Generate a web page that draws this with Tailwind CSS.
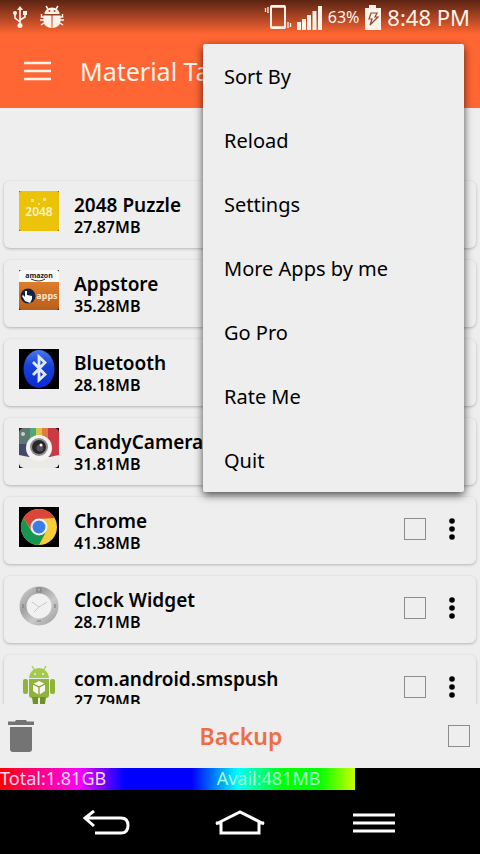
<!DOCTYPE html>
<html lang="en">
<head>
    <meta charset="UTF-8">
    <meta name="viewport" content="width=device-width, initial-scale=1.0">
    <title>Material Task Manager</title>
    <script src="https://cdn.jsdelivr.net/npm/@tailwindcss/browser@4"></script>
</head>
<body class="bg-black font-['Noto_Sans',sans-serif] text-black">
<div class="relative flex flex-col h-screen overflow-hidden">

    <!-- Header -->
    <header class="bg-[#ff6633] text-[#fff3ea]">
        <div class="flex items-center justify-between h-[34px] pl-3 pr-[10px] bg-linear-to-b from-[#5c2413] to-[#ff6633]">
            <div class="flex items-center gap-3">
                <svg class="w-4 h-6" viewBox="0 0 16 24" fill="none" stroke="currentColor" stroke-width="1.6">
                    <path d="M8 3v17M8 17l-5-4V8M8 15l5-3V8"/>
                    <path d="M5 5l3-4 3 4z" fill="currentColor" stroke="none"/>
                    <circle cx="8" cy="20.500" r="2.500" fill="currentColor" stroke="none"/>
                    <circle cx="3" cy="8" r="2" fill="currentColor" stroke="none"/>
                    <path d="M11 6h4v4h-4z" fill="currentColor" stroke="none"/>
                </svg>
                <svg class="w-6 h-6" viewBox="0 0 24 24" fill="currentColor">
                    <path d="M4.500 9a7.500 6.500 0 0 1 15 0z"/>
                    <path d="M3.500 10.500h8V23C6.500 22.500 3.500 20 3.500 16zM12.500 10.500h8V16c0 4-3 6.500-8 7z"/>
                    <path d="M8 4L6 1M16 4l2-3M4 12H1.500V9M4 15H0M4 18l-3 2M20 12h2.500V9M20 15h4M20 18l3 2" fill="none" stroke="currentColor" stroke-width="1.500"/>
                    <circle cx="9.500" cy="6" r="1" fill="#b5451f"/>
                    <circle cx="14.500" cy="6" r="1" fill="#b5451f"/>
                </svg>
            </div>
            <div class="flex items-center gap-1">
                <svg class="w-7 h-7" viewBox="0 0 28 28" fill="none" stroke="currentColor">
                    <rect x="7" y="3" width="14" height="22" rx="1" stroke-width="2"/>
                    <path d="M7 3.500h14M7 24.500h14" stroke-width="2.500"/>
                    <path d="M4 4v6M1.500 5v4M24 19v6M26.500 20v4" stroke-width="1.300"/>
                </svg>
                <svg class="w-7 h-7" viewBox="0 0 28 28" fill="currentColor">
                    <path d="M1 19h4v8H1zM6 16h4v11H6zM11 12h4v15h-4zM16.500 8h4v19h-4zM22 3h4v24h-4z"/>
                </svg>
                <span class="text-base leading-6">63%</span>
                <svg class="w-5 h-7" viewBox="0 0 20 28">
                    <path d="M6 2h7v3h5v22H2V5h4z" fill="currentColor"/>
                    <path d="M8 10h6l-2 4h3l-8 8 2-6H6z" fill="none" stroke="#8a4a35" stroke-width="1.200"/>
                </svg>
                <span class="text-[22px] leading-6">8:48 PM</span>
            </div>
        </div>
        <div class="flex items-center h-[74px] px-6 gap-7">
            <button type="button" aria-label="Open navigation">
                <svg class="block w-7 h-6" viewBox="0 0 28 24" stroke="currentColor" stroke-width="2.500">
                    <path d="M0 4h27M0 12h27M0 20h27"/>
                </svg>
            </button>
            <h1 class="text-[25px] leading-8 whitespace-nowrap">Material Task</h1>
        </div>
    </header>

    <!-- App list -->
    <main class="flex-1 min-h-0 overflow-hidden bg-[#eeeeee] px-1 pt-[73px]">
        <ul class="flex flex-col gap-3">
            <li class="flex h-[67px] rounded-md pl-[15px] pr-4 bg-[#eeeeee] shadow-[0_1px_3px_rgba(0,0,0,0.25)]">
                <svg class="w-10 h-10 mt-[10px] shrink-0" viewBox="0 0 40 40">
                    <rect width="40" height="40" fill="#4d4a20"/>
                    <rect width="40" height="40" rx="2" fill="#ecc30b"/>
                    <path d="M12 8h3v3h-3zM24 7h3v3h-3zM19 12h2v2h-2z" fill="#f7e58a"/>
                    <text x="20" y="25" text-anchor="middle" font-size="12" font-weight="600" fill="#fbf3c4">2048</text>
                </svg>
                <div class="flex-1 pl-[15px] pt-3 font-semibold">
                    <h2 class="text-[19px] leading-6">2048 Puzzle</h2>
                    <p class="text-base leading-5">27.87MB</p>
                </div>
                <div class="flex items-center gap-[18px] pb-1">
                    <input type="checkbox" aria-label="Select 2048 Puzzle" class="appearance-none size-[22px] border border-[#8c8c8c] checked:bg-[#ff6633]">
                    <button type="button" aria-label="2048 Puzzle options">
                        <svg class="block w-4 h-6" viewBox="0 0 16 24"><circle cx="8" cy="4" r="2.800"/><circle cx="8" cy="12" r="2.800"/><circle cx="8" cy="20" r="2.800"/></svg>
                    </button>
                </div>
            </li>
            <li class="flex h-[67px] rounded-md pl-[15px] pr-4 bg-[#eeeeee] shadow-[0_1px_3px_rgba(0,0,0,0.25)]">
                <svg class="w-10 h-10 mt-[10px] shrink-0" viewBox="0 0 40 40">
                    <defs>
                        <linearGradient id="amazon" x2="0" y2="1"><stop offset="0" stop-color="#f08a30"/><stop offset="1" stop-color="#b85f1b"/></linearGradient>
                    </defs>
                    <rect width="40" height="40" fill="#222"/>
                    <rect width="40" height="40" rx="3" fill="url(#amazon)"/>
                    <path d="M0 12V3a3 3 0 0 1 3-3h34a3 3 0 0 1 3 3v9z" fill="#fafafa"/>
                    <text x="20" y="8" text-anchor="middle" font-size="7" font-weight="700" fill="#222">amazon</text>
                    <path d="M12 9q8 4 14 0" fill="none" stroke="#333" stroke-width="1"/>
                    <circle cx="9" cy="26" r="7.500" fill="#16233f"/>
                    <path d="M6 31l-3-5 1-1 2 2v-6h2v4l5 1v3l-2 4z" fill="#fff"/>
                    <text x="28" y="29" text-anchor="middle" font-size="9" font-weight="700" fill="#ffe3c4">apps</text>
                </svg>
                <div class="flex-1 pl-[15px] pt-3 font-semibold">
                    <h2 class="text-[19px] leading-6">Appstore</h2>
                    <p class="text-base leading-5">35.28MB</p>
                </div>
                <div class="flex items-center gap-[18px] pb-1">
                    <input type="checkbox" aria-label="Select Appstore" class="appearance-none size-[22px] border border-[#8c8c8c] checked:bg-[#ff6633]">
                    <button type="button" aria-label="Appstore options">
                        <svg class="block w-4 h-6" viewBox="0 0 16 24"><circle cx="8" cy="4" r="2.800"/><circle cx="8" cy="12" r="2.800"/><circle cx="8" cy="20" r="2.800"/></svg>
                    </button>
                </div>
            </li>
            <li class="flex h-[67px] rounded-md pl-[15px] pr-4 bg-[#eeeeee] shadow-[0_1px_3px_rgba(0,0,0,0.25)]">
                <svg class="w-10 h-10 mt-[10px] shrink-0" viewBox="0 0 40 40">
                    <defs>
                        <linearGradient id="bt" x2="0" y2="1"><stop offset="0" stop-color="#4a78ee"/><stop offset="0.400" stop-color="#1743d8"/><stop offset="1" stop-color="#0a2bd0"/></linearGradient>
                    </defs>
                    <rect width="40" height="40"/>
                    <ellipse cx="20" cy="20" rx="15.500" ry="19" fill="url(#bt)"/>
                    <path d="M14 13l12 12.500-6 5.500V8l6 5.500L14 26" fill="none" stroke="#dfe9fb" stroke-width="2.800"/>
                </svg>
                <div class="flex-1 pl-[15px] pt-3 font-semibold">
                    <h2 class="text-[19px] leading-6">Bluetooth</h2>
                    <p class="text-base leading-5">28.18MB</p>
                </div>
                <div class="flex items-center gap-[18px] pb-1">
                    <input type="checkbox" aria-label="Select Bluetooth" class="appearance-none size-[22px] border border-[#8c8c8c] checked:bg-[#ff6633]">
                    <button type="button" aria-label="Bluetooth options">
                        <svg class="block w-4 h-6" viewBox="0 0 16 24"><circle cx="8" cy="4" r="2.800"/><circle cx="8" cy="12" r="2.800"/><circle cx="8" cy="20" r="2.800"/></svg>
                    </button>
                </div>
            </li>
            <li class="flex h-[67px] rounded-md pl-[15px] pr-4 bg-[#eeeeee] shadow-[0_1px_3px_rgba(0,0,0,0.25)]">
                <svg class="w-10 h-10 mt-[10px] shrink-0" viewBox="0 0 40 40">
                    <defs>
                        <clipPath id="candy"><rect width="40" height="40" rx="5"/></clipPath>
                    </defs>
                    <rect width="40" height="40" fill="#111"/>
                    <g clip-path="url(#candy)">
                        <rect width="40" height="40" fill="#414a68"/>
                        <path d="M0 0h11v16H0z" fill="#5e7770"/>
                        <path d="M11 0h6v26h-6z" fill="#4fa877"/>
                        <path d="M17 0h6v26h-6z" fill="#d9c54b"/>
                        <path d="M23 0h6v26h-6z" fill="#e07c3f"/>
                        <path d="M29 0h11v28H29z" fill="#c93a45"/>
                        <path d="M0 27q20 5 40 0v13H0z" fill="#eceae6"/>
                    </g>
                    <circle cx="4" cy="6" r="2" fill="#c3d3cb"/>
                    <circle cx="20" cy="20" r="13" fill="#f5f3f1"/>
                    <circle cx="20" cy="19" r="9" fill="#908d90"/>
                    <circle cx="20" cy="19" r="7" fill="#29272d"/>
                    <circle cx="21" cy="20" r="3.500" fill="#55505e"/>
                    <circle cx="22" cy="17" r="1.500" fill="#fff"/>
                </svg>
                <div class="flex-1 pl-[15px] pt-3 font-semibold">
                    <h2 class="text-[19px] leading-6">CandyCamera</h2>
                    <p class="text-base leading-5">31.81MB</p>
                </div>
                <div class="flex items-center gap-[18px] pb-1">
                    <input type="checkbox" aria-label="Select CandyCamera" class="appearance-none size-[22px] border border-[#8c8c8c] checked:bg-[#ff6633]">
                    <button type="button" aria-label="CandyCamera options">
                        <svg class="block w-4 h-6" viewBox="0 0 16 24"><circle cx="8" cy="4" r="2.800"/><circle cx="8" cy="12" r="2.800"/><circle cx="8" cy="20" r="2.800"/></svg>
                    </button>
                </div>
            </li>
            <li class="flex h-[67px] rounded-md pl-[15px] pr-4 bg-[#eeeeee] shadow-[0_1px_3px_rgba(0,0,0,0.25)]">
                <svg class="w-10 h-10 mt-[10px] shrink-0" viewBox="0 0 40 40">
                    <rect width="40" height="40"/>
                    <circle cx="20" cy="20" r="18" fill="#f9cd3a"/>
                    <path d="M4.400 11A18 18 0 0 1 35.600 11L20 12l-7 12z" fill="#d8473a"/>
                    <path d="M4.400 11A18 18 0 0 0 20 38l7.500-14-7.500 3-7.500-3z" fill="#16964f"/>
                    <circle cx="20" cy="20" r="8.500" fill="#f4f4f4"/>
                    <circle cx="20" cy="20" r="6.500" fill="#3c7de6"/>
                </svg>
                <div class="flex-1 pl-[15px] pt-3 font-semibold">
                    <h2 class="text-[19px] leading-6">Chrome</h2>
                    <p class="text-base leading-5">41.38MB</p>
                </div>
                <div class="flex items-center gap-[18px] pb-1">
                    <input type="checkbox" aria-label="Select Chrome" class="appearance-none size-[22px] border border-[#8c8c8c] checked:bg-[#ff6633]">
                    <button type="button" aria-label="Chrome options">
                        <svg class="block w-4 h-6" viewBox="0 0 16 24"><circle cx="8" cy="4" r="2.800"/><circle cx="8" cy="12" r="2.800"/><circle cx="8" cy="20" r="2.800"/></svg>
                    </button>
                </div>
            </li>
            <li class="flex h-[67px] rounded-md pl-[15px] pr-4 bg-[#eeeeee] shadow-[0_1px_3px_rgba(0,0,0,0.25)]">
                <svg class="w-10 h-10 mt-[10px] shrink-0" viewBox="0 0 40 40">
                    <defs>
                        <linearGradient id="steel" x2="1" y2="1"><stop offset="0" stop-color="#d6d6d6"/><stop offset="0.350" stop-color="#a2a2a2"/><stop offset="0.600" stop-color="#c9c9c9"/><stop offset="1" stop-color="#9a9a9a"/></linearGradient>
                    </defs>
                    <circle cx="20" cy="20" r="19.500" fill="url(#steel)"/>
                    <circle cx="20" cy="20" r="12.500" fill="#f1f1f1"/>
                    <path d="M13 16l7 5 8-5M20 21l-5 5" fill="none" stroke="#c8c8c8" stroke-width="1"/>
                    <path d="M18 2h4v4h-4zM4 18v4M36 18v4M18 35h4" fill="none" stroke="#808080" stroke-width="1.200"/>
                </svg>
                <div class="flex-1 pl-[15px] pt-3 font-semibold">
                    <h2 class="text-[19px] leading-6">Clock Widget</h2>
                    <p class="text-base leading-5">28.71MB</p>
                </div>
                <div class="flex items-center gap-[18px] pb-1">
                    <input type="checkbox" aria-label="Select Clock Widget" class="appearance-none size-[22px] border border-[#8c8c8c] checked:bg-[#ff6633]">
                    <button type="button" aria-label="Clock Widget options">
                        <svg class="block w-4 h-6" viewBox="0 0 16 24"><circle cx="8" cy="4" r="2.800"/><circle cx="8" cy="12" r="2.800"/><circle cx="8" cy="20" r="2.800"/></svg>
                    </button>
                </div>
            </li>
            <li class="flex h-[67px] rounded-md pl-[15px] pr-4 bg-[#eeeeee] shadow-[0_1px_3px_rgba(0,0,0,0.25)]">
                <svg class="w-10 h-10 mt-[10px] shrink-0" viewBox="0 0 40 40" fill="#8fb43a">
                    <path d="M10 13a10 10 0 0 1 20 0z" fill="#a5c94a"/>
                    <path d="M13 1l3 5M27 1l-3 5" stroke="#a5c94a" stroke-width="1.200"/>
                    <path d="M10 14h20v16a3 3 0 0 1-3 3H13a3 3 0 0 1-3-3z"/>
                    <rect x="4" y="14" width="5" height="15" rx="2"/>
                    <rect x="31" y="14" width="5" height="15" rx="2"/>
                    <path d="M13 32h6v7h-5zM21 32h6l-1 7h-5z" fill="#6f9128"/>
                    <circle cx="16" cy="9" r="1" fill="#eee"/>
                    <circle cx="24" cy="9" r="1" fill="#eee"/>
                    <path d="M20 16l6 3v7l-6 4-6-4v-7z" fill="#f6f8ee"/>
                    <path d="M14 19l6 3 6-3M20 22v8" fill="none" stroke="#7b9a3a" stroke-width="1.200"/>
                </svg>
                <div class="flex-1 pl-[15px] pt-3 font-semibold">
                    <h2 class="text-[19px] leading-6">com.android.smspush</h2>
                    <p class="text-base leading-5">27.79MB</p>
                </div>
                <div class="flex items-center gap-[18px] pb-1">
                    <input type="checkbox" aria-label="Select com.android.smspush" class="appearance-none size-[22px] border border-[#8c8c8c] checked:bg-[#ff6633]">
                    <button type="button" aria-label="com.android.smspush options">
                        <svg class="block w-4 h-6" viewBox="0 0 16 24"><circle cx="8" cy="4" r="2.800"/><circle cx="8" cy="12" r="2.800"/><circle cx="8" cy="20" r="2.800"/></svg>
                    </button>
                </div>
            </li>
        </ul>
    </main>

    <!-- Actions -->
    <div class="relative flex items-center justify-between h-16 pl-2 pr-[10px] bg-[#eeeeee]">
        <button type="button" aria-label="Uninstall selected">
            <svg class="block w-[26px] h-8" viewBox="0 0 26 32" fill="#747474">
                <path d="M8 0h10l1 1.500h7V5H0V1.500h7zM2 7h22v22a3 3 0 0 1-3 3H5a3 3 0 0 1-3-3z"/>
            </svg>
        </button>
        <button type="button" class="text-[23px] leading-8 font-semibold text-[#ee6e44]">Backup</button>
        <input type="checkbox" aria-label="Select all" class="appearance-none size-[22px] border border-[#8c8c8c] checked:bg-[#ff6633]">
    </div>

    <!-- Storage -->
    <div class="h-[22px]">
        <div class="grid grid-cols-[61%_39%] w-[74%] h-full bg-[linear-gradient(to_right,#ff0000_0%,#ff0066_8%,#ff00cc_18%,#ff00ff_22%,#0000ff_35%,#0000ff_54%,#00ffff_67%,#00ff00_80%,#00ff00_90%,#ccff00_100%)] text-lg leading-5 text-[#ffd9ee] whitespace-nowrap">
            <span>Total:1.81GB</span>
            <span class="text-[#a8ffc8]">Avail:481MB</span>
        </div>
    </div>

    <!-- System navigation -->
    <nav class="flex items-center justify-center gap-[82px] h-16 text-white">
        <button type="button" aria-label="Back">
            <svg class="block w-[52px] h-8" viewBox="0 0 52 32" fill="none" stroke="currentColor" stroke-width="3">
                <path d="M14 5L5 12l9 8M6 12h35q7 0 7 7.500T41 27H15"/>
            </svg>
        </button>
        <button type="button" aria-label="Home">
            <svg class="block w-[52px] h-8" viewBox="0 0 52 32" fill="none" stroke="currentColor" stroke-width="3">
                <path d="M2 18L26 6l24 12M2 17h5v10h38V17h5"/>
            </svg>
        </button>
        <button type="button" aria-label="Menu">
            <svg class="block w-[52px] h-8" viewBox="0 0 52 32" stroke="currentColor" stroke-width="3">
                <path d="M5 9h42M5 17h42M5 25h42"/>
            </svg>
        </button>
    </nav>

    <!-- Overflow menu -->
    <div role="menu" class="absolute top-11 right-4 flex flex-col w-[261px] rounded-xs bg-[#eeeeee] shadow-[0_3px_8px_rgba(0,0,0,0.7)] text-xl">
        <button type="button" role="menuitem" class="h-16 px-[21px] pt-[2px] text-left hover:bg-gray-300">Sort By</button>
        <button type="button" role="menuitem" class="h-16 px-[21px] pt-[2px] text-left hover:bg-gray-300">Reload</button>
        <button type="button" role="menuitem" class="h-16 px-[21px] pt-[2px] text-left hover:bg-gray-300">Settings</button>
        <button type="button" role="menuitem" class="h-16 px-[21px] pt-[2px] text-left hover:bg-gray-300">More Apps by me</button>
        <button type="button" role="menuitem" class="h-16 px-[21px] pt-[2px] text-left hover:bg-gray-300">Go Pro</button>
        <button type="button" role="menuitem" class="h-16 px-[21px] pt-[2px] text-left hover:bg-gray-300">Rate Me</button>
        <button type="button" role="menuitem" class="h-16 px-[21px] pt-[2px] text-left hover:bg-gray-300">Quit</button>
    </div>
</div>
</body>
</html>
